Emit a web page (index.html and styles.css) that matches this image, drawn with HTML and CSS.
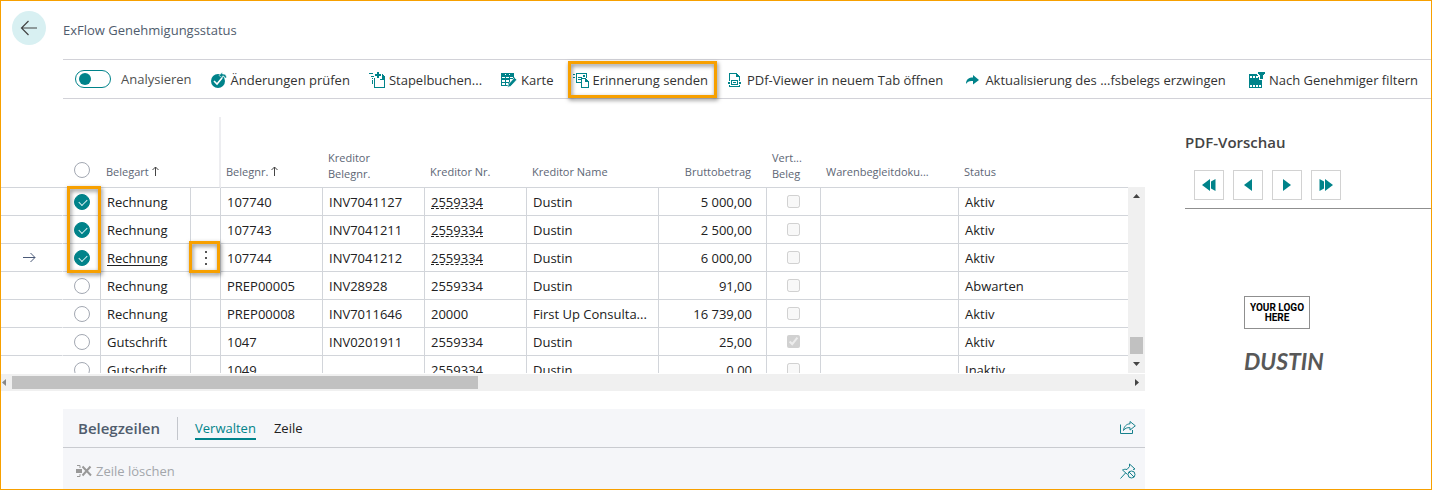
FILE: index.html
```html
<!DOCTYPE html>
<html lang="de">
<head>
<meta charset="utf-8">
<title>ExFlow Genehmigungsstatus</title>
<link rel="stylesheet" href="styles.css">
</head>
<body>
<div class="page">
  <header class="page-head">
    <button class="back" type="button" aria-label="Zurück">
      <svg width="18" height="16" viewBox="0 0 18 16"><path d="M17 8H2M8.500 1 1.500 8l7 7"/></svg>
    </button>
    <h1 class="title">ExFlow Genehmigungsstatus</h1>
  </header>

  <nav class="toolbar">
    <div class="tools">
      <label class="switch-label"><input class="switch" type="checkbox" role="switch">Analysieren</label>
      <button class="tool" type="button">
        <svg class="icon" viewBox="0 0 16 16"><circle cx="7" cy="9" r="7" class="fill"/><path d="M3 9l3 3 5-6" stroke="#fff" stroke-width="1.600" fill="none"/><path d="M8 3.500 11.500 0v2c3 0 4 1 4 4h-2c0-1.500-.5-2-2-2v2z" class="fill" stroke="#fff" stroke-width=".6"/></svg>Änderungen prüfen</button>
      <button class="tool" type="button">
        <svg class="icon crisp" viewBox="0 0 16 16"><path class="fill" d="M0 1h4v1H0zM2 4h3v1H2zM8 0h2v2h2v2h-2v2H8V4H6V2h2zM5 6h1v9h9V7h1v9H5zM13 2h1v1h1v1h1v4h-5V7h2zM3 6h1v1H3zM3 8h1v4H3z"/></svg>Stapelbuchen...</button>
      <button class="tool" type="button">
        <svg class="icon" viewBox="0 0 16 16"><path class="fill crisp" d="M0 1h13v4h1v2H9v5l-2 2H0z"/><path class="crisp" fill="#fff" d="M1 5h3v1H1zM5 5h3v1H5zM9 5h3v1H9zM1 8h3v2H1zM5 8h3v2H5zM1 11h3v2H1zM5 11h2v2H5zM4 2h1v1H4zM8 2h1v1H8z"/><path class="fill" stroke="#fff" stroke-width=".7" d="M6.500 15.500 7.500 12l6-6.500 2.300 2.300-6 6.500z"/></svg>Karte</button>
      <span class="marked">
        <button class="tool" type="button">
          <svg class="icon crisp" viewBox="0 0 16 16"><path class="fill" d="M0 2h2v1H0zM0 5h2v1H0zM3 1h11v5h-1V2H4v8h4v1H3zM10 3h2v2h-2zM5 5h4v1H5zM5 7h3v1H5zM8 6h5v1h1v1h1v1h1v7H8zM9 7v8h6v-5h-3V7z" fill-rule="evenodd"/></svg>Erinnerung senden</button>
        <span class="mark mark-tool"></span>
      </span>
    </div>
    <div class="tools rest">
      <button class="tool" type="button">
        <svg class="icon narrow crisp" viewBox="0 0 13 16"><path class="fill" d="M1 1h8v1h1v1h1v1h1v5h-1V5H8V2H2v7H1zM0 10h2v2H0zM11 10h2v2h-2zM1 13h1v1h9v-1h1v2H1z"/><path class="fill" fill-rule="evenodd" d="M3 8h7v5H3zM4 9v3h5V9zM5 10h3v1H5z"/></svg>PDf-Viewer in neuem Tab öffnen</button>
      <button class="tool" type="button">
        <svg class="icon narrow" viewBox="0 0 13 16"><path class="fill" d="M0 12C0 7 3 5.500 7 5.500V3l6 5-6 4.500V9C3.500 8.500 1.500 9.500 0 12z"/></svg>Aktualisierung des ...fsbelegs erzwingen</button>
      <button class="tool" type="button">
        <svg class="icon crisp" viewBox="0 0 16 16"><path class="fill" d="M0 2h13v14H0z"/><path fill="#fff" d="M1 4h2v2H1zM4 4h2v2H4zM7 4h2v2H7zM1 13h2v2H1zM4 13h2v2H4zM7 13h2v2H7zM10 13h2v2h-2zM8 0h8v3l-2 2v4h-1V8h-3V5H9V3H8z"/><path class="fill" d="M9 0h7v2h-1v1h-1v4h-3V3h-1V2H9z"/></svg>Nach Genehmiger filtern</button>
    </div>
  </nav>

  <div class="body">
    <main class="main">
      <div class="grid-view">
        <div class="viewport">
          <table class="grid">
            <colgroup><col class="c-gutter"><col class="c-select"><col class="c-type"><col class="c-menu"><col class="c-no"><col class="c-no"><col class="c-no"><col class="c-name"><col class="c-amount"><col class="c-flag"><col class="c-ship"><col></colgroup>
            <thead>
              <tr>
                <th></th>
                <th class="select"><input class="round" type="checkbox" aria-label="Alle auswählen"></th>
                <th>Belegart <svg class="sort" viewBox="0 0 7 10"><path d="M3.500 10V1M.5 4l3-3 3 3"/></svg></th>
                <th class="frozen"></th>
                <th>Belegnr. <svg class="sort" viewBox="0 0 7 10"><path d="M3.500 10V1M.5 4l3-3 3 3"/></svg></th>
                <th class="two">Kreditor<br>Belegnr.</th>
                <th>Kreditor Nr.</th>
                <th>Kreditor Name</th>
                <th class="num">Bruttobetrag</th>
                <th class="two">Vert...<br>Beleg</th>
                <th>Warenbegleitdoku...</th>
                <th>Status</th>
              </tr>
            </thead>
            <tbody>
              <tr><td></td><td class="select"><input class="round" type="checkbox" checked aria-label="107740"><span class="mark mark-rows"></span></td><td>Rechnung</td><td></td><td>107740</td><td>INV7041127</td><td><a class="vendor" href="#">2559334</a></td><td>Dustin</td><td class="num">5 000,00</td><td class="flag"><input type="checkbox" disabled aria-label="Beleg"></td><td></td><td>Aktiv</td></tr>
              <tr><td></td><td class="select"><input class="round" type="checkbox" checked aria-label="107743"></td><td>Rechnung</td><td></td><td>107743</td><td>INV7041211</td><td><a class="vendor" href="#">2559334</a></td><td>Dustin</td><td class="num">2 500,00</td><td class="flag"><input type="checkbox" disabled aria-label="Beleg"></td><td></td><td>Aktiv</td></tr>
              <tr><td class="current"><svg width="13" height="11" viewBox="0 0 13 11"><path d="M0 5.500h12M7.500 1 12 5.500 7.500 10"/></svg></td><td class="select"><input class="round" type="checkbox" checked aria-label="107744"></td><td><a class="open" href="#">Rechnung</a></td><td class="menu"><button class="dots" type="button" aria-label="Weitere Optionen"><svg width="2" height="14" viewBox="0 0 2 14"><path d="M0 0h2v2H0zM0 6h2v2H0zM0 12h2v2H0z"/></svg></button><span class="mark mark-menu"></span></td><td>107744</td><td>INV7041212</td><td><a class="vendor" href="#">2559334</a></td><td>Dustin</td><td class="num">6 000,00</td><td class="flag"><input type="checkbox" disabled aria-label="Beleg"></td><td></td><td>Aktiv</td></tr>
              <tr><td></td><td class="select"><input class="round" type="checkbox" aria-label="PREP00005"></td><td>Rechnung</td><td></td><td>PREP00005</td><td>INV28928</td><td>2559334</td><td>Dustin</td><td class="num">91,00</td><td class="flag"><input type="checkbox" disabled aria-label="Beleg"></td><td></td><td>Abwarten</td></tr>
              <tr><td></td><td class="select"><input class="round" type="checkbox" aria-label="PREP00008"></td><td>Rechnung</td><td></td><td>PREP00008</td><td>INV7011646</td><td>20000</td><td>First Up Consulta...</td><td class="num">16 739,00</td><td class="flag"><input type="checkbox" disabled aria-label="Beleg"></td><td></td><td>Aktiv</td></tr>
              <tr><td></td><td class="select"><input class="round" type="checkbox" aria-label="1047"></td><td>Gutschrift</td><td></td><td>1047</td><td>INV0201911</td><td>2559334</td><td>Dustin</td><td class="num">25,00</td><td class="flag"><input type="checkbox" disabled checked aria-label="Beleg"></td><td></td><td>Aktiv</td></tr>
              <tr><td></td><td class="select"><input class="round" type="checkbox" aria-label="1049"></td><td>Gutschrift</td><td></td><td>1049</td><td></td><td>2559334</td><td>Dustin</td><td class="num">0,00</td><td class="flag"><input type="checkbox" disabled aria-label="Beleg"></td><td></td><td>Inaktiv</td></tr>
            </tbody>
          </table>
        </div>
        <div class="vscroll">
          <svg width="7" height="4" viewBox="0 0 7 4"><path d="M0 4 3.500 0 7 4z"/></svg>
          <span class="vthumb"></span>
          <svg width="7" height="4" viewBox="0 0 7 4"><path d="M0 0h7L3.500 4z"/></svg>
        </div>
      </div>
      <div class="hscroll">
        <svg class="dim" width="4" height="7" viewBox="0 0 4 7"><path d="M4 0v7L0 3.500z"/></svg>
        <span class="hthumb"></span>
        <svg width="4" height="7" viewBox="0 0 4 7"><path d="M0 0v7l4-3.500z"/></svg>
      </div>

      <section class="lines">
        <div class="lines-head">
          <h2 class="lines-title">Belegzeilen</h2>
          <a class="tab active" href="#">Verwalten</a>
          <a class="tab" href="#">Zeile</a>
          <button class="icon-btn" type="button" aria-label="Teilen"><svg class="icon line" viewBox="0 0 16 16"><path d="M.5 4.500v9h12V10M10 1.500l5.300 4.300-5.300 4.300V7.700C7 7.400 5 8.300 3.500 10.500 4 6.500 6.300 4 10 3.800z"/></svg></button>
        </div>
        <div class="lines-tools">
          <button class="tool off" type="button" disabled><svg class="icon" viewBox="0 0 16 16"><path d="M0 6h6v4H0z" fill="#999"/><path d="M1 2.500h3V5M1 13.500h3V11" fill="none" stroke="#999"/><path d="M6.500 3.500 15 12.500M14.500 3.500l-8 9" stroke="#999" stroke-width="2" fill="none"/></svg>Zeile löschen</button>
          <button class="icon-btn" type="button" aria-label="Lösen"><svg class="icon line" viewBox="0 0 16 16"><path d="M.5 15.500l5-5.500M7.500 11.500 2.500 7c1.500-.8 3-.9 4.500-.5L9.500 3.500V1l5.500 5-2 .5"/><circle cx="11.500" cy="11.500" r="3.500"/><path d="M9 9l5 5"/></svg></button>
        </div>
      </section>
    </main>

    <aside class="preview">
      <h2 class="preview-title">PDF-Vorschau</h2>
      <div class="pager">
        <button type="button" aria-label="Erste Seite"><svg width="14" height="12" viewBox="0 0 14 12"><path d="M0 6l8-6v12zM9 2.500 13.500 0v12L9 9.500z"/></svg></button>
        <button type="button" aria-label="Vorherige Seite"><svg width="14" height="12" viewBox="0 0 14 12"><path d="M3 6l8-6v12z"/></svg></button>
        <button type="button" aria-label="Nächste Seite"><svg width="14" height="12" viewBox="0 0 14 12"><path d="M11 6 3 0v12z"/></svg></button>
        <button type="button" aria-label="Letzte Seite"><svg width="14" height="12" viewBox="0 0 14 12"><path d="M14 6 6 0v12zM5 2.500.5 0v12L5 9.500z"/></svg></button>
      </div>
      <div class="document">
        <div class="logo">YOUR LOGO<br>HERE</div>
        <p class="vendor-name">DUSTIN</p>
      </div>
    </aside>
  </div>
</div>
</body>
</html>
```
FILE: styles.css
```css
* { box-sizing: border-box; }
body {
  margin: 0;
  font: 13px/20px "Open Sans", "Noto Sans", sans-serif;
  color: #212121;
  background: #fff;
}
button, input { font: inherit; color: inherit; margin: 0; }
button { background: none; border: 0; padding: 0; }
h1, h2, p { margin: 0; font-weight: 400; }
a { color: inherit; text-decoration: none; }
svg { display: block; flex: none; }

.page {
  min-height: 100vh;
  border: 1px solid #f7a000;
  display: flex;
  flex-direction: column;
}
.page-head {
  display: flex;
  align-items: center;
  gap: 17px;
  padding: 10px 11px 14px;
}
.back {
  width: 34px;
  height: 34px;
  border-radius: 50%;
  background: #d8f0f2;
  display: grid;
  place-items: center;
}
.back svg { fill: none; stroke: #444; stroke-width: 1.2; }
.title { font-size: 13px; color: #505c6d; padding-top: 4px; }

.toolbar {
  margin-left: 62px;
  height: 40px;
  padding: 0 13px 0 12px;
  border-top: 1px solid #d2d2d8;
  border-bottom: 1px solid #d2d2d8;
  display: flex;
  align-items: center;
  gap: 20px;
  white-space: nowrap;
}
.tools { display: flex; align-items: center; gap: 19px; }
.rest { flex: 1; justify-content: space-between; }
.tool { display: flex; align-items: center; gap: 4px; padding-top: 1px; color: #333; }
.icon { width: 16px; height: 16px; }
.narrow { width: 13px; margin-right: 2px; }
.fill { fill: #00838a; }
.crisp { shape-rendering: crispEdges; }
.switch-label { display: flex; align-items: center; gap: 10px; color: #505050; }
.switch {
  appearance: none;
  width: 36px;
  height: 18px;
  border: 1px solid #00838a;
  border-radius: 9px;
  padding: 2px 3px;
}
.switch::after {
  content: "";
  display: block;
  width: 12px;
  height: 12px;
  border-radius: 50%;
  background: #00838a;
}
.marked { position: relative; }

.body { display: flex; flex: 1; }
.main { flex: 1; min-width: 0; padding-top: 18px; display: flex; flex-direction: column; }
.grid-view { display: flex; align-items: flex-end; }
.viewport { flex: 1; min-width: 0; height: 256px; overflow: hidden; }
.grid {
  width: 100%;
  table-layout: fixed;
  border-collapse: separate;
  border-spacing: 0;
  white-space: nowrap;
}
.c-gutter { width: 62px; }
.c-select { width: 38px; }
.c-type { width: 90px; }
.c-menu { width: 30px; }
.c-no { width: 102px; }
.c-name { width: 132px; }
.c-amount { width: 108px; }
.c-flag { width: 54px; }
.c-ship { width: 138px; }
.grid th {
  height: 71px;
  padding: 0 0 7px 5px;
  font-size: 11px;
  line-height: 16px;
  font-weight: 400;
  color: #5d6675;
  text-align: left;
  vertical-align: bottom;
  border-bottom: 1px solid #d2d5da;
}
.grid th.two { padding-bottom: 5px; }
.grid th.frozen { border-right: 2px solid #ededf0; }
.grid td {
  height: 28px;
  padding: 0 0 0 6px;
  line-height: 20px;
  border-right: 1px solid #d2d5da;
  border-bottom: 1px solid #d2d5da;
}
.grid td:first-child { border-right-color: #fff; }
.grid td:last-child { border-right: 0; }
.grid .num { text-align: right; padding-right: 14px; }
.grid th.num { padding-right: 16px; }
.grid .select { padding: 0 0 0 11px; position: relative; }
.grid th.select { padding-bottom: 9px; }
.grid .flag { padding: 0; }
.flag input { display: block; width: 13px; height: 13px; margin: 0 0 0 20px; }
.round {
  appearance: none;
  display: block;
  width: 16px;
  height: 16px;
  border: 1px solid #a3a8b2;
  border-radius: 50%;
}
.round:checked { background: #00838a; border-color: #00838a; }
.round:checked::after {
  content: "";
  display: block;
  width: 7px;
  height: 4px;
  margin: 4px 0 0 4px;
  border: solid #d8f0f2;
  border-width: 0 0 1px 1px;
  transform: rotate(-45deg);
}
.sort { display: inline-block; width: 7px; height: 10px; fill: none; stroke: #444; }
.vendor { text-decoration: underline dashed 1px; text-underline-offset: 1px; }
.open { text-decoration: underline 1px; text-underline-offset: 2px; }
.grid .current { padding-left: 22px; }
.current svg { fill: none; stroke: #4b5a78; }
.grid .menu { position: relative; padding: 0; }
.dots { display: block; margin: 0 auto; }
.dots svg { fill: #555; }
.mark {
  position: absolute;
  border: 3px solid #f7a000;
  filter: drop-shadow(1px 2px 2px rgba(0, 0, 0, .5));
  pointer-events: none;
  z-index: 1;
}
.mark-tool { inset: -8px -9px -8px -5px; }
.mark-rows { top: -2px; left: 4px; width: 34px; height: 87px; }
.mark-menu { top: -3px; left: -2px; width: 31px; height: 32px; }

.vscroll {
  width: 17px;
  height: 186px;
  padding: 7px 2px;
  background: #f0f0f0;
  display: flex;
  flex-direction: column;
  align-items: center;
}
.vscroll svg, .hscroll svg { fill: #444; }
.vthumb { width: 13px; height: 17px; margin: auto 0 8px; background: #c1c1c1; }
.hscroll {
  height: 17px;
  margin: 1px 0 18px;
  padding: 0 6px 0 1px;
  background: #f0f0f0;
  display: flex;
  align-items: center;
  justify-content: space-between;
}
.hscroll .dim { fill: #888; }
.hthumb { width: 41%; height: 13px; margin: 0 auto 0 6px; background: #c1c1c1; }

.lines { flex: 1; margin-left: 62px; background: #f5f6f9; }
.lines-head {
  height: 39px;
  padding: 0 9px 0 15px;
  border-bottom: 1px solid #c9cbd0;
  display: flex;
  align-items: center;
}
.lines-title {
  font-size: 15px;
  font-weight: 600;
  line-height: 23px;
  color: #505c6d;
  padding-right: 17px;
  margin-right: 17px;
  border-right: 1px solid #c3c6cc;
}
.tab { margin-right: 18px; padding-top: 3px; line-height: 19px; border-bottom: 2px solid transparent; }
.tab.active { color: #00838a; border-color: #00838a; }
.icon-btn { margin-left: auto; }
.line { fill: none; stroke: #16808c; }
.lines-tools { display: flex; align-items: center; padding: 12px 9px 6px 13px; }
.tool.off { color: #a3a6ab; }

.preview { width: 286px; padding: 33px 0 0 40px; }
.preview-title { font-size: 15px; line-height: 20px; font-weight: 600; color: #444; }
.pager {
  display: flex;
  gap: 9px;
  padding: 18px 9px 8px;
  border-bottom: 1px solid #8f8f8f;
}
.pager button {
  width: 30px;
  height: 30px;
  border: 1px solid #d2d2d2;
  display: grid;
  place-items: center;
}
.pager svg { fill: #00838a; }
.document { padding: 87px 0 0 59px; }
.logo {
  width: 66px;
  border: 1px solid #8f8f8f;
  padding: 6px 0 5px;
  font: 700 10px/10px Roboto, sans-serif;
  color: #000;
  text-align: center;
  white-space: nowrap;
}
.vendor-name { padding-top: 17px; font: italic 700 23px/30px Lato, sans-serif; color: #585858; }
```
